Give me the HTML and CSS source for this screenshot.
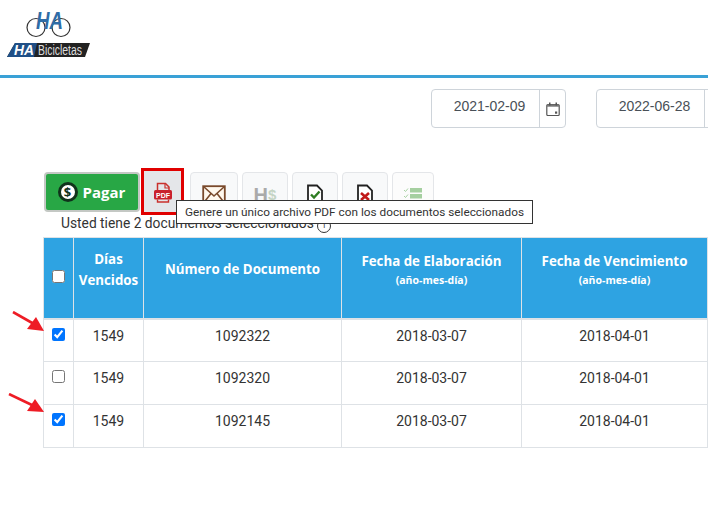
FILE: index.html
```html
<!DOCTYPE html>
<html lang="en">
<head>
    <meta charset="UTF-8">
    <meta name="viewport" content="width=device-width, initial-scale=1.0">
    <title>HA Bicicletas</title>
    <link rel="stylesheet" href="styles.css">
</head>
<body>

    <header class="top">
        <svg class="logo" width="92" height="60" viewBox="0 0 92 60">
            <circle cx="36" cy="27.500" r="9" fill="none" stroke="#333" stroke-width="1.200"/>
            <circle cx="61" cy="27.500" r="9" fill="none" stroke="#333" stroke-width="1.200"/>
            <text x="36" y="29" class="logo-ha" textLength="27" lengthAdjust="spacingAndGlyphs">HA</text>
            <path d="M7 57 15 43H90L85 57z" fill="#222"/>
            <path d="M7 57 15 43H37L34 57z" fill="#1f4f86"/>
            <text x="14" y="55" class="logo-ha-small" textLength="20" lengthAdjust="spacingAndGlyphs">HA</text>
            <text x="38" y="54.500" class="logo-name" textLength="44" lengthAdjust="spacingAndGlyphs">Bicicletas</text>
        </svg>
    </header>

    <div class="dates">
        <div class="date-box">
            <span class="date-value">2021-02-09</span>
            <span class="date-icon">
                <svg width="16" height="16" viewBox="0 0 16 16">
                    <rect x="1.800" y="3.500" width="12.400" height="11" rx="1" fill="none" stroke="#555" stroke-width="1.200"/>
                    <rect x="2" y="3.500" width="12" height="2.200" fill="#777"/>
                    <rect x="4" y="1.500" width="1.500" height="3" fill="#555"/>
                    <rect x="10.500" y="1.500" width="1.500" height="3" fill="#555"/>
                    <rect x="10" y="10.500" width="2.200" height="2.200" fill="#555"/>
                </svg>
            </span>
        </div>
        <div class="date-box">
            <span class="date-value">2022-06-28</span>
            <span class="date-icon"></span>
        </div>
    </div>

    <div class="toolbar">
        <button class="btn-pay">
            <span class="pay-icon">$</span>
            Pagar
        </button>
        <div class="pdf-mark">
            <button class="tool tool-pdf">
                <svg width="20" height="22" viewBox="0 0 20 22">
                    <path d="M4.500 9V1.500h8L16 5v4" fill="none" stroke="#c9302c" stroke-width="1.500"/>
                    <path d="M12 1.500V6h4" fill="none" stroke="#c9302c" stroke-width="1.200"/>
                    <rect x="1" y="8" width="18" height="9.500" rx="1.500" fill="#c9202c"/>
                    <path d="M4.500 17.500v2.500h11v-2.500" fill="none" stroke="#c9302c" stroke-width="1.400"/>
                    <text x="10" y="15.500" class="pdf-text">PDF</text>
                </svg>
            </button>
        </div>
        <button class="tool tool-mail">
            <svg width="24" height="20" viewBox="0 0 24 20">
                <rect x="1.200" y="1.200" width="21.600" height="17" fill="#fff8ee" stroke="#7a4a2c" stroke-width="1.800"/>
                <path d="M1.500 1.500 12 11 22.500 1.500M1.500 18 9 8.500M22.500 18 15 8.500" fill="none" stroke="#7a4a2c" stroke-width="1.600"/>
            </svg>
        </button>
        <button class="tool tool-hs">H<span class="hs-small">$</span></button>
        <button class="tool tool-doc">
            <svg width="18" height="22" viewBox="0 0 18 22">
                <path d="M2 1.500h9l5 5v14H2z" fill="#fff" stroke="#222" stroke-width="1.800"/>
                <path d="M5 10.500l3 3 5.500-6" fill="none" stroke="#2e7d22" stroke-width="2.400"/>
            </svg>
        </button>
        <button class="tool tool-doc">
            <svg width="18" height="22" viewBox="0 0 18 22">
                <path d="M2 1.500h9l5 5v14H2z" fill="#fff" stroke="#222" stroke-width="1.800"/>
                <path d="M5 9l8 7M13 9l-8 7" fill="none" stroke="#c01818" stroke-width="2.600"/>
            </svg>
        </button>
        <button class="tool tool-list">
            <svg width="20" height="20" viewBox="0 0 20 20">
                <path d="M1 3l1.500 1.500L5 1.500M1 9l1.500 1.500L5 7.500M1 15l1.500 1.500L5 13.500" fill="none" stroke="#a9d3a4" stroke-width="1"/>
                <rect x="7" y="1" width="12" height="4.500" fill="#a5cfa0"/>
                <rect x="7" y="7" width="12" height="4.500" fill="#a5cfa0"/>
                <rect x="7" y="13" width="12" height="4.500" fill="#a5cfa0"/>
            </svg>
        </button>
    </div>

    <div class="selected">Usted tiene 2 documentos seleccionados <span class="info-dot">i</span></div>

    <div class="tooltip">Genere un único archivo PDF con los documentos seleccionados</div>

    <table class="docs">
        <colgroup>
            <col class="col-check">
            <col class="col-days">
            <col class="col-number">
            <col class="col-date">
            <col class="col-date-last">
        </colgroup>
        <thead>
            <tr>
                <th class="th-check"><input type="checkbox"></th>
                <th>Días Vencidos</th>
                <th>Número de Documento</th>
                <th>Fecha de Elaboración<small>(año-mes-día)</small></th>
                <th>Fecha de Vencimiento<small>(año-mes-día)</small></th>
            </tr>
        </thead>
        <tbody>
            <tr>
                <td><input type="checkbox" checked></td>
                <td>1549</td>
                <td>1092322</td>
                <td>2018-03-07</td>
                <td>2018-04-01</td>
            </tr>
            <tr>
                <td><input type="checkbox"></td>
                <td>1549</td>
                <td>1092320</td>
                <td>2018-03-07</td>
                <td>2018-04-01</td>
            </tr>
            <tr>
                <td><input type="checkbox" checked></td>
                <td>1549</td>
                <td>1092145</td>
                <td>2018-03-07</td>
                <td>2018-04-01</td>
            </tr>
        </tbody>
    </table>

    <!-- red arrows pointing at the checked rows -->
    <svg class="arrow arrow-one" width="34" height="24" viewBox="0 0 34 24">
        <path d="M1 1 22 13" stroke="#ee1c25" stroke-width="2.600" fill="none"/>
        <path d="M32 20 15 18 24 6z" fill="#ee1c25"/>
    </svg>
    <svg class="arrow arrow-two" width="38" height="24" viewBox="0 0 38 24">
        <path d="M1 1 26 13" stroke="#ee1c25" stroke-width="2.600" fill="none"/>
        <path d="M36 19 19 18 27 6z" fill="#ee1c25"/>
    </svg>

</body>
</html>
```

FILE: styles.css
```css
html, body {
    overflow: hidden;
}
body {
    font-family: Roboto, "Open Sans", Arial, sans-serif;
    background-color: #fff;
    color: #333;
    margin: 0;
    padding: 0;
    height: 509px;
    position: relative;
}

.top {
    height: 75px;
    border-bottom: 3px solid #3aa1d6;
}
.logo {
    display: block;
}
.logo-ha {
    font-family: "Liberation Sans", Arial, sans-serif;
    font-size: 24px;
    font-weight: bold;
    font-style: italic;
    fill: #2f6ca6;
}
.logo-ha-small {
    font-family: "Liberation Sans", Arial, sans-serif;
    font-size: 15px;
    font-weight: bold;
    font-style: italic;
    fill: #fff;
}
.logo-name {
    font-family: "Liberation Sans", Arial, sans-serif;
    font-size: 14px;
    fill: #ddd;
}

.dates {
    display: flex;
    gap: 30px;
    padding: 11px 0 0 431px;
}
.date-box {
    flex: none;
    width: 135px;
    height: 39px;
    box-sizing: border-box;
    border: 1px solid #ced4da;
    border-radius: 4px;
    display: flex;
}
.date-value {
    flex: 1;
    text-align: center;
    font-family: "Liberation Sans", Arial, sans-serif;
    font-size: 14px;
    line-height: 32px;
    color: #495057;
    padding-left: 8px;
}
.date-icon {
    width: 25px;
    border-left: 1px solid #ced4da;
    display: flex;
    align-items: center;
    justify-content: center;
}

.toolbar {
    display: flex;
    align-items: flex-start;
    margin-top: 40px;
    padding-left: 44px;
    height: 50px;
}
.btn-pay {
    width: 96px;
    height: 40px;
    margin-top: 4px;
    display: flex;
    align-items: center;
    justify-content: center;
    gap: 6px;
    background-color: #28a745;
    color: #fff;
    border: 2px solid #c4c8c4;
    border-radius: 4px;
    font-family: "Open Sans", Arial, sans-serif;
    font-size: 15px;
    font-weight: bold;
}
.pay-icon {
    width: 14px;
    height: 14px;
    border: 2px solid #10331c;
    box-shadow: 0 0 0 1px #10331c;
    border-radius: 50%;
    background-color: #fff;
    color: #10331c;
    font-size: 13px;
    line-height: 14px;
    text-align: center;
}
.pdf-mark {
    width: 43px;
    height: 47px;
    box-sizing: border-box;
    margin-left: 1px;
    border: 3px solid #e00000;
    background-color: #e4e6e9;
}
.tool {
    width: 48px;
    height: 40px;
    margin-top: 4px;
    padding: 7px 0 0;
    display: flex;
    justify-content: center;
    align-items: flex-start;
    background-color: #f8f9fa;
    border: 1px solid #e4e6e9;
    border-radius: 4px;
}
.tool-pdf {
    width: 37px;
    height: 41px;
    margin: 0;
    padding-top: 11px;
    background-color: transparent;
    border: none;
}
.pdf-text {
    font-family: "Liberation Sans", Arial, sans-serif;
    font-size: 7px;
    font-weight: bold;
    fill: #fff;
    text-anchor: middle;
}
.tool-mail {
    margin-left: 6px;
    padding-top: 12px;
}
.tool-hs {
    width: 46px;
    margin-left: 4px;
    padding-top: 11px;
    color: #aaa;
    font-family: "Liberation Sans", Arial, sans-serif;
    font-size: 20px;
    font-weight: bold;
    line-height: 22px;
}
.hs-small {
    font-size: 15px;
    color: #c4d4c4;
}
.tool-doc {
    width: 46px;
    margin-left: 4px;
    padding-top: 11px;
}
.tool-list {
    width: 42px;
    margin-left: 4px;
    padding-top: 14px;
    background-color: #fcfcfc;
}

.selected {
    margin: -4px 0 0 61px;
    font-size: 13.800px;
    line-height: 18px;
    height: 18px;
    white-space: nowrap;
}
.info-dot {
    display: inline-block;
    width: 12px;
    height: 12px;
    border: 1px solid #333;
    border-radius: 50%;
    font-size: 8px;
    line-height: 12px;
    text-align: center;
}

.tooltip {
    position: absolute;
    left: 176px;
    top: 200px;
    height: 24px;
    box-sizing: border-box;
    padding: 0 8px;
    border: 1px solid #333;
    background-color: #fff;
    color: #333;
    font-size: 11.800px;
    line-height: 22px;
    white-space: nowrap;
}

.docs {
    margin: 5px 0 0 43px;
    width: 664px;
    table-layout: fixed;
    border-collapse: collapse;
    font-size: 14px;
    text-align: center;
}
.col-check {
    width: 30px;
}
.col-days {
    width: 70px;
}
.col-number {
    width: 198px;
}
.col-date {
    width: 180px;
}
.col-date-last {
    width: 186px;
}
.docs th {
    height: 81px;
    box-sizing: border-box;
    padding: 0 2px 16px;
    background-color: #2ea3e2;
    color: #fff;
    border: 1px solid #dee2e6;
    border-bottom-width: 2px;
    font-family: "Open Sans", Arial, sans-serif;
    font-size: 13.300px;
    line-height: 21px;
    vertical-align: middle;
}
.docs th small {
    display: block;
    font-size: 10.500px;
    line-height: 16px;
}
.docs .th-check {
    padding: 0 0 2px;
}
.docs td {
    height: 43px;
    padding: 6px 0 0;
    box-sizing: border-box;
    border: 1px solid #dee2e6;
    vertical-align: top;
    line-height: 21px;
}
.docs input {
    display: block;
    width: 13px;
    height: 13px;
    margin: 2px 0 0 8px;
}
.docs th input {
    margin: 0 0 0 8px;
}

.arrow {
    position: absolute;
}
.arrow-one {
    left: 12px;
    top: 311px;
}
.arrow-two {
    left: 8px;
    top: 393px;
}
```
